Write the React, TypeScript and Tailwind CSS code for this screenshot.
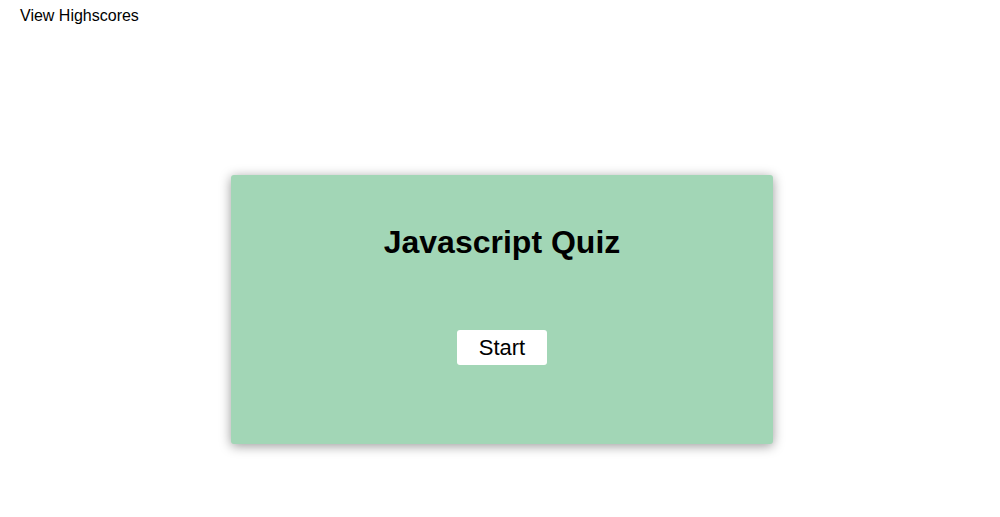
export default function App() {
  return (
    <div className="min-h-[517px] bg-white font-['Liberation_Sans',Arial,sans-serif] text-black">
      {/* Header */}
      <header className="px-5 pt-[4px]">
        <a className="text-base leading-[18px] cursor-pointer">View Highscores</a>
      </header>

      {/* Quiz card */}
      <div className="flex justify-center pl-1 mt-[147px]">
        <section className="w-[542px] h-[269px] rounded-[3px] bg-[#a2d6b6] shadow-[0_2px_12px_rgba(0,0,0,0.4)] flex flex-col items-center pt-[49px]">
          <h1 className="text-[32px] leading-[37px] font-bold">Javascript Quiz</h1>
          <button className="mt-[69px] h-[35px] px-[22px] rounded-[3px] bg-white text-[22px] leading-none">
            Start
          </button>
        </section>
      </div>
    </div>
  );
}
